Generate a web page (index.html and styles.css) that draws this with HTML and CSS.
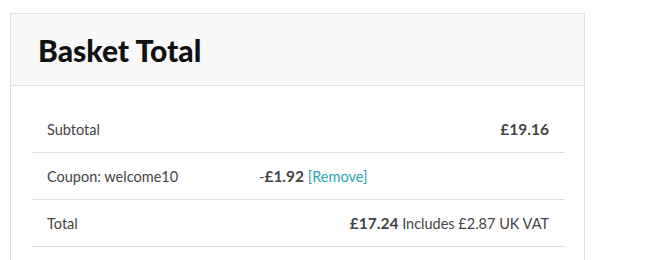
FILE: index.html
```html
<!DOCTYPE html>
<html lang="en">
  <head>
    <meta charset="UTF-8" />
    <meta name="viewport" content="width=device-width, initial-scale=1.0" />
    <title>Basket Total</title>
    <link rel="stylesheet" href="styles.css">
  </head>
  <body>
    <div class="basket-card">
      <div class="basket-header">
        <h2 class="basket-title">Basket Total</h2>
      </div>
      <div class="basket-body">
        <div class="totals-row">
          <div class="totals-label">Subtotal</div>
          <div class="totals-value"><strong>£19.16</strong></div>
        </div>
        <div class="totals-row">
          <div class="totals-label">Coupon: welcome10</div>
          <div class="totals-value left">-<strong>£1.92</strong> <a href="#" class="remove-link">[Remove]</a></div>
        </div>
        <div class="totals-row">
          <div class="totals-label">Total</div>
          <div class="totals-value"><strong>£17.24</strong> <span class="tax-note">Includes £2.87 UK VAT</span></div>
        </div>
      </div>
    </div>
  </body>
</html>
```

FILE: styles.css
```css
body {
  font-family: Lato, "Open Sans", sans-serif;
  background-color: #fff;
  margin: 0;
  padding: 13px 0 0 10px;
  color: #444;
}

.basket-card {
  width: 573px;
  border: 1px solid #ddd;
  min-height: 300px;
}

.basket-header {
  background-color: #f9f9f9;
  border-bottom: 1px solid #ddd;
  height: 71px;
  display: flex;
  align-items: center;
  padding-left: 27px;
}

.basket-title {
  margin: 0;
  font-size: 30px;
  font-weight: 900;
  color: #111;
}

.basket-body {
  padding: 20px 19px 0 20px;
}

.totals-row {
  display: flex;
  align-items: center;
  height: 46px;
  border-bottom: 1px solid #ddd;
  font-size: 14.5px;
}

.totals-label {
  width: 212px;
  padding-left: 16px;
}

.totals-value {
  flex: 1;
  text-align: right;
  padding-right: 16px;
}

.totals-value.left {
  text-align: left;
}

.totals-value strong {
  font-size: 15.5px;
  font-weight: 700;
}

.remove-link {
  color: #2aa5b5;
  text-decoration: none;
}
```
